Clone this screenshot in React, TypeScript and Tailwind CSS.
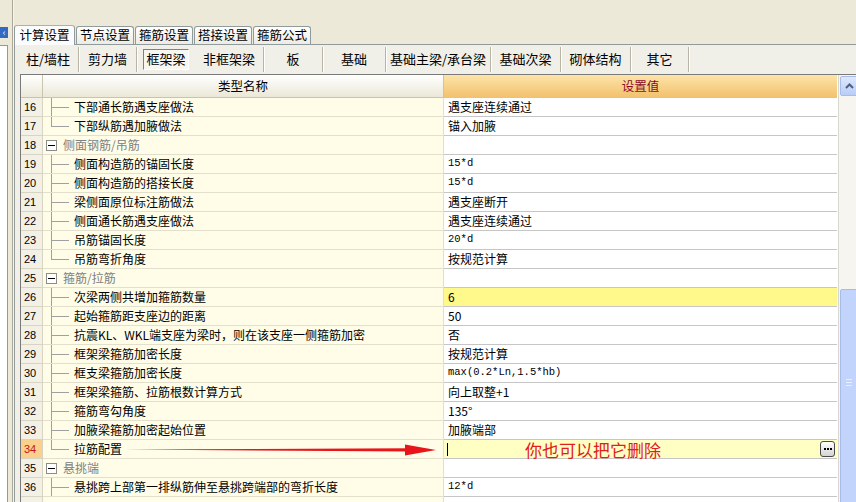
import React from "react";

type Row = {
  n: number;
  name: string;
  value?: string;
  group?: boolean;
  last?: boolean;
  mono?: boolean;
};

const rows: Row[] = [
  { n: 16, name: "下部通长筋遇支座做法", value: "遇支座连续通过" },
  { n: 17, name: "下部纵筋遇加腋做法", value: "锚入加腋", last: true },
  { n: 18, name: "侧面钢筋/吊筋", group: true },
  { n: 19, name: "侧面构造筋的锚固长度", value: "15*d", mono: true },
  { n: 20, name: "侧面构造筋的搭接长度", value: "15*d", mono: true },
  { n: 21, name: "梁侧面原位标注筋做法", value: "遇支座断开" },
  { n: 22, name: "侧面通长筋遇支座做法", value: "遇支座连续通过" },
  { n: 23, name: "吊筋锚固长度", value: "20*d", mono: true },
  { n: 24, name: "吊筋弯折角度", value: "按规范计算", last: true },
  { n: 25, name: "箍筋/拉筋", group: true },
  { n: 26, name: "次梁两侧共增加箍筋数量", value: "6" },
  { n: 27, name: "起始箍筋距支座边的距离", value: "50" },
  { n: 28, name: "抗震KL、WKL端支座为梁时，则在该支座一侧箍筋加密", value: "否" },
  { n: 29, name: "框架梁箍筋加密长度", value: "按规范计算" },
  { n: 30, name: "框支梁箍筋加密长度", value: "max(0.2*Ln,1.5*hb)", mono: true },
  { n: 31, name: "框架梁箍筋、拉筋根数计算方式", value: "向上取整+1" },
  { n: 32, name: "箍筋弯勾角度", value: "135°" },
  { n: 33, name: "加腋梁箍筋加密起始位置", value: "加腋端部" },
  { n: 34, name: "拉筋配置", value: "", last: true },
  { n: 35, name: "悬挑端", group: true },
  { n: 36, name: "悬挑跨上部第一排纵筋伸至悬挑跨端部的弯折长度", value: "12*d", mono: true },
  { n: 37, name: "", value: "" },
];

const topTabs = ["计算设置", "节点设置", "箍筋设置", "搭接设置", "箍筋公式"];
const subTabs: [string, number][] = [
  ["柱/墙柱", 61],
  ["剪力墙", 58],
  ["框架梁", 58],
  ["非框架梁", 69],
  ["板", 59],
  ["基础", 63],
  ["基础主梁/承台梁", 105],
  ["基础次梁", 70],
  ["砌体结构", 70],
  ["其它", 58],
];

const font = { fontFamily: '"Noto Sans CJK SC", "Liberation Sans", sans-serif' };

function NameCell({ r }: { r: Row }) {
  if (r.group) {
    return (
      <div className="relative flex h-full items-center">
        <div className="ml-[3px] flex h-[11px] w-[11px] items-center justify-center border border-[#8c8c8c] bg-white">
          <div className="h-px w-[7px] bg-black" />
        </div>
        <span className="ml-[6px] text-[#808080]">{r.name}</span>
      </div>
    );
  }
  if (!r.name) return <div className="h-full" />;
  return (
    <div className="relative flex h-full items-center">
      <div
        className={`absolute left-[8px] top-0 w-px bg-[#a0a0a0] ${r.last ? "h-[10px]" : "h-full"}`}
      />
      <div className="absolute left-[9px] top-[9px] h-px w-[17px] bg-[#a0a0a0]" />
      <span className="ml-[31px] whitespace-nowrap text-black">{r.name}</span>
    </div>
  );
}

function ValueCell({ r }: { r: Row }) {
  if (r.n === 34) {
    return (
      <div className="flex h-full items-center bg-[#ffffc4] pl-[3px]">
        <div className="h-[13px] w-px bg-black" />
        <span className="ml-[77px] whitespace-nowrap text-[17px] leading-none text-[#e0201c]">你也可以把它删除</span>
        <div className="ml-auto mr-[2px] flex h-[16px] w-[15px] shrink-0 items-center justify-center gap-[1px] rounded-[3px] border border-[#4a4a4a] bg-gradient-to-b from-white to-[#d4d4d4]">
          <div className="h-[2px] w-[2px] bg-black" />
          <div className="h-[2px] w-[2px] bg-black" />
          <div className="h-[2px] w-[2px] bg-black" />
        </div>
      </div>
    );
  }
  return (
    <div
      className={`flex h-full items-center pl-[4px] ${r.n === 26 ? "bg-[#fff98c]" : "bg-white"}`}
      style={r.mono ? { fontFamily: '"Liberation Mono", "Noto Sans CJK SC", monospace', fontSize: 10.5 } : undefined}
    >
      {r.value}
    </div>
  );
}

export default function App() {
  return (
    <div className="flex h-[502px] w-[856px] overflow-hidden bg-[#ece9d8] text-[12px]" style={font}>
      {/* left docked panel edge */}
      <div className="flex w-[12px] shrink-0 flex-col">
        <div className="h-[27px] shrink-0" />
        <div className="flex h-[11px] w-[8px] shrink-0 items-center justify-center bg-[#316ac5] text-[9px] leading-none text-white">
          ‹
        </div>
        <div className="h-[7px] shrink-0" />
        <div className="w-[8px] flex-1 border-r border-t border-[#7f9db9] bg-white" />
      </div>
      <div className="w-[2px] shrink-0 border-l border-[#aca899] bg-[#f5f4ee]" />

      {/* right content */}
      <div className="flex min-w-0 flex-1 flex-col">
        <div className="h-[25px] shrink-0" />
        {/* top tabs */}
        <div className="flex h-[19px] shrink-0 items-end">
          {topTabs.map((t, i) =>
            i === 0 ? (
              <div
                key={t}
                className="z-10 -mb-px flex h-[20px] w-[61px] items-center justify-center rounded-t-[3px] border border-b-0 border-[#919b9c] border-t-[#f5a623] bg-[#fcfcfe] text-[12.5px] text-black"
              >
                {t}
              </div>
            ) : (
              <div
                key={t}
                className="ml-px flex h-[18px] w-[58px] items-center justify-center rounded-t-[3px] border border-b-0 border-[#919b9c] bg-gradient-to-b from-white to-[#ecebe6] text-[12.5px] text-black"
              >
                {t}
              </div>
            )
          )}
        </div>
        {/* panel */}
        <div className="flex min-h-0 flex-1 flex-col border-l border-t border-[#919b9c] bg-[#f0efe8] pl-[1px]">
          {/* sub tabs */}
          <div className="flex h-[27px] shrink-0 items-center pl-[2px] pt-[1px]">
            {subTabs.map(([t, w]) =>
              t === "框架梁" ? (
                <div key={t} style={{ width: w }} className="flex h-[25px] items-center justify-center">
                  <div className="flex h-[21px] w-[46px] items-center justify-center border border-[#808080] border-b-white border-r-white bg-[#f7f6f1] text-[13px]">
                    {t}
                  </div>
                </div>
              ) : (
                <div
                  key={t}
                  style={{ width: w }}
                  className="flex h-[25px] items-center justify-center border-r border-[#b8b5a6] text-[13px] shadow-[1px_0_0_#ffffff]"
                >
                  {t}
                </div>
              )
            )}
          </div>
          <div className="h-[2px] shrink-0" />
          {/* grid */}
          <div className="ml-[4px] flex min-h-0 flex-1 flex-col overflow-hidden border-l border-t border-[#7a7a7a] bg-white">
            <div className="flex">
              <div className="flex shrink-0 flex-col">
                {/* header */}
                <div className="flex h-[23px] shrink-0">
                  <div className="w-[22px] border-b border-r border-[#c8c4b0] bg-gradient-to-b from-white to-[#ebe8d8]" />
                  <div className="flex w-[401px] items-center justify-center border-b border-r border-[#c8c4b0] bg-gradient-to-b from-white to-[#ebe8d8] text-[12.5px]">
                    类型名称
                  </div>
                  <div className="flex w-[393px] items-center justify-center bg-gradient-to-b from-[#fde4a8] to-[#f2c06a] text-[12.5px] text-[#8b0a2a]">
                    设置值
                  </div>
                </div>
                {/* rows */}
                <div className="relative">
                  {rows.map((r) => (
                    <div key={r.n} className="flex h-[19px] shrink-0">
                      <div
                        className={`flex w-[22px] items-center pl-[3px] text-[11px] border-b border-r border-[#d8d4c2] ${
                          r.n === 34 ? "bg-[#fbcf8c] text-[#c01818]" : "bg-[#f3f1e6] text-black"
                        }`}
                        style={{ fontFamily: '"Liberation Sans", sans-serif' }}
                      >
                        {r.n < 37 ? r.n : ""}
                      </div>
                      <div className="w-[401px] border-b border-r border-[#e2dfcd] bg-[#fffde8]">
                        <NameCell r={r} />
                      </div>
                      <div className="w-[393px] border-b border-[#c6c6c6]">
                        <ValueCell r={r} />
                      </div>
                    </div>
                  ))}
                  {/* red annotation arrow */}
                  <svg
                    className="pointer-events-none absolute left-[104px] top-[345px]"
                    width="312"
                    height="14"
                    viewBox="0 0 312 14"
                  >
                    <path d="M0 6.6 L284 5.2 L284 8.6 Z" fill="#e8151b" />
                    <path d="M280 1.5 L311 7 L280 12.5 Z" fill="#e8151b" />
                  </svg>
                </div>
              </div>
              {/* scrollbar */}
              <div className="ml-px flex w-[21px] shrink-0 flex-col border-l border-[#d8d8d0] bg-[#f6f5f0]">
                <div className="m-px flex h-[20px] shrink-0 items-center justify-center rounded-[2px] border border-[#a8bce8] bg-gradient-to-b from-[#dfe8fd] to-[#b9cdf7]">
                  <svg width="9" height="6" viewBox="0 0 9 6">
                    <path d="M1 5 L4.5 1.5 L8 5" stroke="#4d6185" strokeWidth="2" fill="none" />
                  </svg>
                </div>
                <div className="h-[192px] shrink-0" />
                <div className="mx-px flex flex-1 flex-col items-center justify-center rounded-[2px] border border-[#a8bce8] bg-[#c3d4fc]">
                  <div className="mt-[-40px] flex flex-col gap-[2px]">
                    <div className="h-px w-[6px] bg-[#e8eefc]" />
                    <div className="h-px w-[6px] bg-[#e8eefc]" />
                    <div className="h-px w-[6px] bg-[#e8eefc]" />
                  </div>
                </div>
              </div>
            </div>
          </div>
        </div>
      </div>
    </div>
  );
}
